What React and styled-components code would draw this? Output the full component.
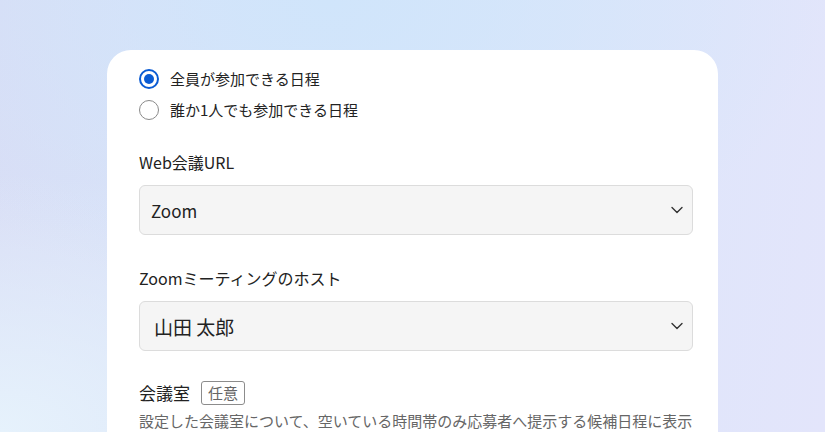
import React from 'react';
import styled, { createGlobalStyle } from 'styled-components';

const GlobalStyle = createGlobalStyle`
    html, body {
        margin: 0;
        padding: 0;
    }
    body {
        font-family: 'Noto Sans CJK JP', 'Noto Sans', sans-serif;
        color: #222;
    }
`;

const Page = styled.div`
    min-height: 100vh;
    height: 432px;
    overflow: hidden;
    display: flex;
    justify-content: center;
    padding-top: 50px;
    box-sizing: border-box;
    background:
        radial-gradient(ellipse 60% 70% at 40% 0%, #d0e5fb 0%, rgba(208, 229, 251, 0) 100%),
        radial-gradient(ellipse 50% 60% at 0% 100%, #e6f2fc 0%, rgba(230, 242, 252, 0) 100%),
        linear-gradient(100deg, #d9ddf5 0%, #dae6fa 45%, #e3e5fb 100%);
`;

const Card = styled.div`
    width: 611px;
    background: #fff;
    border-radius: 24px 24px 0 0;
    padding: 13px 25px 40px 32px;
    box-sizing: border-box;
`;

const RadioGroup = styled.div`
    display: flex;
    flex-direction: column;
`;

const RadioRow = styled.label`
    display: flex;
    align-items: center;
    height: 31px;
    gap: 11px;
    font-size: 15px;
    cursor: pointer;
`;

const RadioCircle = styled.span`
    width: 20px;
    height: 20px;
    box-sizing: border-box;
    border-radius: 50%;
    border: ${(p) => (p.checked ? '2px solid #0a5bd3' : '1.5px solid #8a8a8a')};
    display: flex;
    align-items: center;
    justify-content: center;
    &::after {
        content: '';
        width: 10px;
        height: 10px;
        border-radius: 50%;
        background: #0a5bd3;
        display: ${(p) => (p.checked ? 'block' : 'none')};
    }
`;

const Field = styled.div`
    margin-top: ${(p) => p.top || 30}px;
`;

const Label = styled.div`
    display: flex;
    align-items: center;
    gap: 11px;
    font-size: ${(p) => p.size || 16}px;
    line-height: 24px;
    margin-bottom: ${(p) => (p.tight ? 5 : 11)}px;
`;

const Tag = styled.span`
    display: inline-flex;
    align-items: center;
    justify-content: center;
    height: 24px;
    padding: 0 6px;
    box-sizing: border-box;
    border: 1px solid #8c8c8c;
    border-radius: 3px;
    font-size: 15px;
    color: #666;
`;

const Select = styled.div`
    height: 50px;
    box-sizing: border-box;
    border: 1.5px solid #dcdcdc;
    border-radius: 6px;
    background: #f5f5f5;
    display: flex;
    align-items: center;
    justify-content: space-between;
    padding: 0 9px 0 ${(p) => p.pad || 11}px;
    font-size: ${(p) => p.size || 17}px;
    cursor: pointer;
`;

const Desc = styled.p`
    margin: 0 -6px 0 0;
    font-size: 15px;
    line-height: 22px;
    color: #666;
`;

const Chevron = () => (
    <svg width="12" height="8" viewBox="0 0 12 8" fill="none">
        <path d="M1 1.5l5 5 5-5" stroke="#333" strokeWidth="1.4" strokeLinecap="round" strokeLinejoin="round" />
    </svg>
);

const App = () => {
    return (
        <>
            <GlobalStyle />
            <Page>
                <Card>
                    <RadioGroup>
                        <RadioRow>
                            <RadioCircle checked />
                            全員が参加できる日程
                        </RadioRow>
                        <RadioRow>
                            <RadioCircle />
                            誰か1人でも参加できる日程
                        </RadioRow>
                    </RadioGroup>

                    <Field top={25}>
                        <Label>Web会議URL</Label>
                        <Select>
                            <span>Zoom</span>
                            <Chevron />
                        </Select>
                    </Field>

                    <Field top={31}>
                        <Label>Zoomミーティングのホスト</Label>
                        <Select size={19} pad={14}>
                            <span>山田 太郎</span>
                            <Chevron />
                        </Select>
                    </Field>

                    <Field>
                        <Label size={17} tight>
                            会議室
                            <Tag>任意</Tag>
                        </Label>
                        <Desc>設定した会議室について、空いている時間帯のみ応募者へ提示する候補日程に表示されます。</Desc>
                    </Field>
                </Card>
            </Page>
        </>
    );
};

export default App;
